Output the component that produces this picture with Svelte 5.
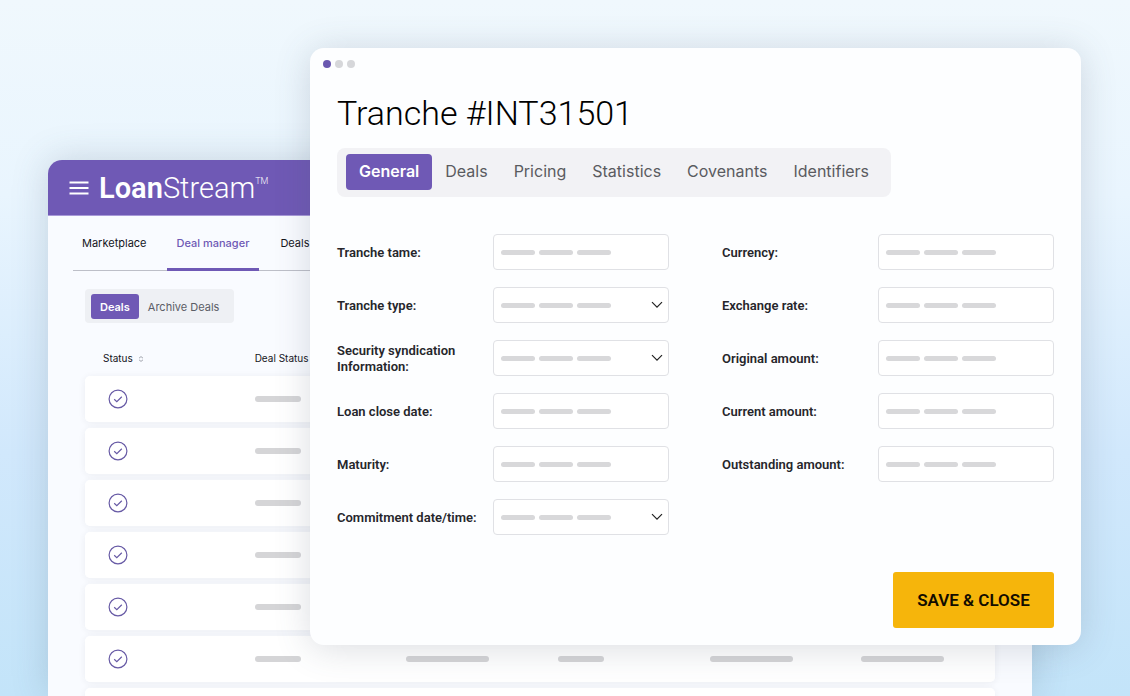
<script>
  let mainTab = $state('Deal manager')
  let listTab = $state('Deals')
  let trancheTab = $state('General')

  const mainTabs = ['Marketplace', 'Deal manager', 'Deals']
  const listTabs = ['Deals', 'Archive Deals']
  const trancheTabs = ['General', 'Deals', 'Pricing', 'Statistics', 'Covenants', 'Identifiers']

  const rows = [1, 2, 3, 4, 5, 6, 7]
  const bars = ['short', 'long', 'short', 'long', 'long']

  const columns = [
    [
      { id: 'name', label: 'Tranche tame:' },
      { id: 'type', label: 'Tranche type:', select: true },
      { id: 'security', label: 'Security syndication Information:', select: true },
      { id: 'close-date', label: 'Loan close date:' },
      { id: 'maturity', label: 'Maturity:' },
      { id: 'commitment', label: 'Commitment date/time:', select: true }
    ],
    [
      { id: 'currency', label: 'Currency:' },
      { id: 'rate', label: 'Exchange rate:' },
      { id: 'original', label: 'Original amount:' },
      { id: 'current', label: 'Current amount:' },
      { id: 'outstanding', label: 'Outstanding amount:' }
    ]
  ]
</script>

<div class="scene">
  <main class="app">
    <header class="app-header">
      <button class="burger">
        <svg width="20" height="14" viewBox="0 0 20 14">
          <path d="M0.5 1.5h19M0.5 7h19M0.5 12.5h19" stroke="#fff" stroke-width="2" />
        </svg>
      </button>
      <span class="logo"><b>Loan</b>Stream<sup>TM</sup></span>
    </header>

    <nav class="main-nav">
      {#each mainTabs as tab}
        <button class:active={mainTab === tab} onclick={() => (mainTab = tab)}>{tab}</button>
      {/each}
    </nav>

    <div class="list-tabs">
      {#each listTabs as tab}
        <button class:active={listTab === tab} onclick={() => (listTab = tab)}>{tab}</button>
      {/each}
    </div>

    <table>
      <thead>
        <tr>
          <th>
            Status
            <svg class="sort" width="6" height="6" viewBox="0 0 6 6">
              <path d="M1 2.2 3 0.6 5 2.2M1 3.8 3 5.4 5 3.8" fill="none" stroke="#8d8f99" stroke-width="0.8" />
            </svg>
          </th>
          <th>Deal Status</th>
          <th></th>
          <th></th>
          <th></th>
          <th></th>
        </tr>
      </thead>
      <tbody>
        {#each rows as row}
          <tr>
            <td>
              <svg class="check" width="20" height="20" viewBox="0 0 20 20" fill="none" stroke="#675aa5">
                <circle cx="10" cy="10" r="8.9" stroke-width="1.2" />
                <path d="M6.2 10.3 8.8 12.7 13.8 7.8" stroke-width="1.2" />
              </svg>
            </td>
            {#each bars as bar}
              <td><span class="bar {bar}"></span></td>
            {/each}
          </tr>
        {/each}
      </tbody>
    </table>
  </main>

  <section class="dialog">
    <div class="dots"><i class="on"></i><i></i><i></i></div>
    <h1>Tranche #INT31501</h1>

    <div class="tranche-tabs">
      {#each trancheTabs as tab}
        <button class:active={trancheTab === tab} onclick={() => (trancheTab = tab)}>{tab}</button>
      {/each}
    </div>

    <form onsubmit={(e) => e.preventDefault()}>
      <div class="columns">
        {#each columns as fields}
          <div class="column">
            {#each fields as field}
              <div class="field">
                <label for={field.id}>{field.label}</label>
                <div class="control">
                  {#if field.select}
                    <select id={field.id}></select>
                  {:else}
                    <input id={field.id} type="text" />
                  {/if}
                  <span class="dashes"><i></i><i></i><i></i></span>
                  {#if field.select}
                    <svg class="chevron" width="12" height="8" viewBox="0 0 12 8">
                      <path d="M1 1.2 6 6.2 11 1.2" fill="none" stroke="#222" stroke-width="1.2" />
                    </svg>
                  {/if}
                </div>
              </div>
            {/each}
          </div>
        {/each}
      </div>
      <button class="save" type="submit">SAVE &amp; CLOSE</button>
    </form>
  </section>
</div>

<style>
  :global(body) {
    margin: 0;
  }

  .scene {
    display: grid;
    min-height: 100vh;
    background: linear-gradient(180deg, #f0f8fd 0%, #e9f5fe 28%, #d1e8fc 65%, #c3e4f9 100%);
    font-family: Inter, sans-serif;
  }

  button {
    border: 0;
    background: none;
    font-family: inherit;
    cursor: pointer;
  }

  /* both windows share one grid cell, the dialog lies on top */
  .app,
  .dialog {
    grid-area: 1 / 1;
  }

  .app {
    contain: size;
    overflow: hidden;
    margin: 160px 98px 0 48px;
    border-radius: 14px 14px 0 0;
    background: #f9fbff;
    box-shadow: 0 0 36px rgba(70, 90, 110, 0.22);
  }

  .app-header {
    display: flex;
    align-items: center;
    gap: 10px;
    height: 56px;
    padding: 0 21px;
    background: #6f59b5;
    border-bottom: 1px solid #a899d8;
    box-sizing: border-box;
  }

  .burger {
    display: flex;
    padding: 0;
  }

  .logo {
    font-family: Roboto, sans-serif;
    font-size: 29px;
    font-weight: 300;
    line-height: 40px;
    color: #fff;
  }

  .logo b {
    font-weight: 600;
  }

  .logo sup {
    font-size: 9px;
    line-height: 10px;
    vertical-align: 14px;
  }

  .main-nav {
    display: flex;
    gap: 11px;
    height: 55px;
    margin: 0 25px;
    box-shadow: inset 0 -1px #bdbfc8;
  }

  .main-nav button {
    padding: 2px 10px 0;
    border-bottom: 3px solid transparent;
    font-size: 11px;
    color: #15151c;
  }

  .main-nav button:first-child {
    padding: 2px 9px 0;
  }

  .main-nav button.active {
    border-color: #6f59b5;
    font-weight: 500;
    color: #6f59b5;
  }

  .list-tabs {
    display: flex;
    width: fit-content;
    margin: 18px 37px 0;
    padding: 5px 6px 4px;
    border-radius: 4px;
    background: #eef0f4;
  }

  .list-tabs button {
    height: 25px;
    padding: 0 9px;
    border-radius: 3px;
    font-size: 11px;
    color: #5b5d66;
  }

  .list-tabs button.active {
    background: #6f59b5;
    font-weight: 600;
    color: #fff;
  }

  table {
    width: calc(100% - 74px);
    margin: 16px 37px 0;
    table-layout: fixed;
    border-spacing: 0 6px;
  }

  th {
    height: 25px;
    padding: 0 0 0 18px;
    font-size: 10px;
    font-weight: 400;
    text-align: left;
    color: #15151c;
  }

  .sort {
    margin-left: 2px;
  }

  tbody tr {
    border-radius: 5px;
    box-shadow: 0 1px 7px rgba(50, 50, 70, 0.07);
  }

  td {
    height: 46px;
    padding: 0 0 0 18px;
    background: #fff;
  }

  td:first-child {
    padding-left: 23px;
    border-radius: 5px 0 0 5px;
  }

  td:last-child {
    border-radius: 0 5px 5px 0;
  }

  .check,
  .bar {
    display: block;
  }

  .bar {
    width: 46px;
    height: 6px;
    border-radius: 3px;
    background: #d5d5d7;
  }

  .bar.long {
    width: 83px;
  }

  .dialog {
    z-index: 1;
    align-self: start;
    margin: 48px 49px 51px 310px;
    padding: 12px 27px 17px;
    border-radius: 14px;
    background: #fdfeff;
    box-shadow: 0 3px 36px rgba(70, 80, 100, 0.2);
  }

  .dots {
    display: flex;
    gap: 4px;
    margin-left: -14px;
  }

  .dots i {
    width: 8px;
    height: 8px;
    border-radius: 50%;
    background: #d6d7da;
  }

  .dots i.on {
    background: #6a58b0;
  }

  h1 {
    margin: 23px 0 13px;
    font-family: Roboto, sans-serif;
    font-size: 34px;
    font-weight: 300;
    line-height: 44px;
    color: #000;
  }

  .tranche-tabs {
    display: flex;
    width: fit-content;
    padding: 6px 9px 7px;
    border-radius: 8px;
    background: #f2f2f5;
  }

  .tranche-tabs button {
    height: 36px;
    padding: 0 13px 2px;
    border-radius: 4px;
    font-size: 16px;
    color: #5a5b60;
  }

  .tranche-tabs button.active {
    background: #6f59b5;
    font-weight: 600;
    color: #fff;
  }

  form {
    display: flex;
    flex-direction: column;
    margin-top: 37px;
    font-family: Roboto, sans-serif;
  }

  .columns {
    display: grid;
    grid-template-columns: 1fr 1fr;
    gap: 53px;
  }

  .column {
    display: flex;
    flex-direction: column;
    gap: 17px;
  }

  .field {
    display: grid;
    grid-template-columns: 156px 1fr;
    align-items: center;
  }

  label {
    padding: 2px 12px 0 0;
    font-size: 13px;
    font-weight: 600;
    line-height: 16px;
    color: #26262b;
  }

  .control {
    display: grid;
    align-items: center;
    height: 36px;
  }

  .control > * {
    grid-area: 1 / 1;
  }

  input,
  select {
    width: 100%;
    height: 36px;
    padding: 0 8px;
    border: 1px solid #e0e1e5;
    border-radius: 4px;
    background: #fff;
    box-sizing: border-box;
    appearance: none;
  }

  .dashes {
    display: flex;
    gap: 4px;
    padding-left: 8px;
    pointer-events: none;
  }

  .dashes i {
    width: 34px;
    height: 5px;
    border-radius: 3px;
    background: #d8d8da;
  }

  .chevron {
    justify-self: end;
    margin-right: 6px;
    pointer-events: none;
  }

  .save {
    align-self: flex-end;
    width: 161px;
    height: 56px;
    margin-top: 37px;
    padding: 0;
    border-radius: 3px;
    background: #f6b50b;
    font-size: 17px;
    font-weight: 600;
    color: #120c00;
  }
</style>
